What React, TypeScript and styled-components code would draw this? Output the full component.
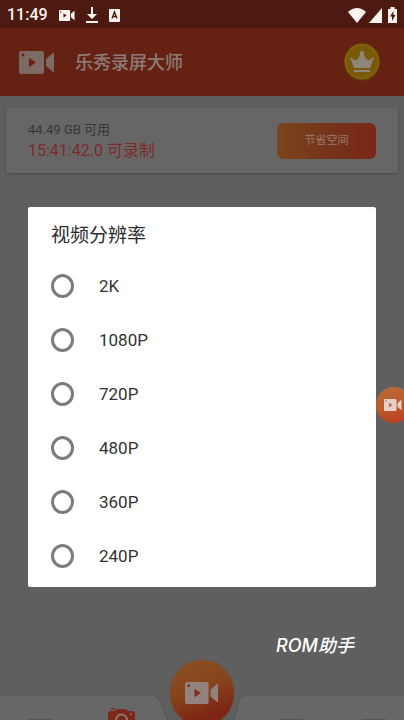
import React from "react";
import styled, { createGlobalStyle } from "styled-components";

const GlobalStyle = createGlobalStyle`
  * { box-sizing: border-box; }
  body {
    margin: 0;
    background: #5f5f5f;
    font-family: Roboto, "Noto Sans CJK SC", sans-serif;
  }
  button { font-family: inherit; border: 0; padding: 0; cursor: pointer; }
`;

const Screen = styled.div`
  position: relative;
  display: flex;
  flex-direction: column;
  height: 100vh;
  overflow: hidden;
  background: #5f5f5f;
`;

const StatusBar = styled.div`
  display: flex;
  align-items: center;
  gap: 11px;
  height: 28px;
  padding: 2px 7px 0 7px;
  background: #4d1a11;
  color: #fff5ee;
`;

const Clock = styled.time`
  font-size: 16px;
  line-height: 20px;
  font-weight: 500;
`;

const StatusRight = styled.div`
  display: flex;
  align-items: center;
  gap: 3px;
  margin-left: auto;
`;

const Header = styled.header`
  display: flex;
  align-items: center;
  height: 68px;
  padding: 0 24px 0 19px;
  gap: 20px;
  background: #652213;
`;

const AppTitle = styled.h1`
  flex: 1;
  margin: 0;
  padding-top: 2px;
  font-size: 18px;
  line-height: 24px;
  font-weight: 500;
  color: #8b7a76;
`;

const CrownButton = styled.button`
  display: flex;
  width: 36px;
  height: 38px;
  background: none;
`;

const StorageCard = styled.section`
  display: flex;
  align-items: center;
  justify-content: space-between;
  height: 65px;
  margin: 12px 6px 0;
  padding: 0 22px;
  border-radius: 3px;
  background: #676667;
  box-shadow: 0 1px 3px rgba(0, 0, 0, 0.25);
`;

const Available = styled.p`
  margin: 0;
  font-size: 13px;
  line-height: 20px;
  color: #363637;
`;

const Recordable = styled.p`
  margin: 0;
  font-size: 16px;
  line-height: 22px;
  color: #7c2b27;
`;

const SaveSpaceButton = styled.button`
  width: 99px;
  height: 36px;
  border-radius: 6px;
  background: linear-gradient(90deg, #7a451a, #76341b 50%, #782716);
  color: #9a7b70;
  font-size: 11px;
  line-height: 16px;
`;

const BottomNav = styled.nav`
  position: relative;
  display: grid;
  grid-template-columns: 1fr 98px 1fr;
  height: 24px;
  margin-top: auto;
`;

const NavGroup = styled.div`
  display: flex;
  justify-content: space-between;
  align-items: flex-end;
  padding: 0 18px 0 28px;
  background: #686768;
`;

const NavButton = styled.button`
  display: flex;
  align-items: flex-end;
  height: 20px;
  background: none;
`;

const RecordButton = styled.button`
  position: absolute;
  left: 50%;
  top: -36px;
  display: flex;
  align-items: center;
  justify-content: center;
  width: 64px;
  height: 66px;
  margin-left: -32px;
  border-radius: 50%;
  background: linear-gradient(160deg, #8a5222, #87431b 45%, #7d2413 80%);
  box-shadow: 0 0 2px #6d4c38;
`;

const FloatingButton = styled.button`
  position: absolute;
  right: -8px;
  top: 387px;
  display: flex;
  align-items: center;
  width: 36px;
  height: 36px;
  padding-left: 8px;
  border-radius: 50%;
  background: linear-gradient(165deg, #b76c3c, #bd5a29 50%, #bd3b20);
`;

const ModalLayer = styled.div`
  position: absolute;
  inset: 74px 28px 0;
  display: flex;
  align-items: center;
  pointer-events: none;
`;

const Dialog = styled.form`
  flex: 1;
  pointer-events: auto;
  padding: 14px 23px 4px;
  border-radius: 2px;
  background: #fff;
`;

const Options = styled.fieldset`
  margin: 0;
  padding: 0;
  border: 0;
`;

const DialogTitle = styled.legend`
  padding: 0;
  margin-bottom: 8px;
  font-size: 19px;
  line-height: 30px;
  color: #2c2c2c;
`;

const Option = styled.label`
  display: flex;
  align-items: center;
  gap: 25px;
  height: 54px;
  font-size: 17px;
  line-height: 24px;
  color: #333;
`;

const Radio = styled.input`
  appearance: none;
  width: 23px;
  height: 24px;
  margin: 0;
  border: 3px solid #7c7c7f;
  border-radius: 50%;
  background: #fff;
  &:checked { box-shadow: inset 0 0 0 4px #fff; background: #e0482b; }
`;

const Watermark = styled.span`
  position: absolute;
  right: 50px;
  bottom: 62px;
  font-family: Inter, "Noto Sans CJK SC", sans-serif;
  font-size: 18px;
  line-height: 24px;
  font-weight: 500;
  font-style: italic;
  color: #fff;
`;

type CamcorderProps = { width: number; height: number; body: string; play: string };

const Camcorder = ({ width, height, body, play }: CamcorderProps) => (
  <svg width={width} height={height} viewBox="0 0 36 23" preserveAspectRatio="none" aria-hidden="true">
    <rect x="0" y="0" width="25" height="23" rx="2" fill={body} />
    <path d="M27 8 34 2Q35 1 35 3V20Q35 22 34 21L27 15Z" fill={body} />
    <path d="M10 7v9l7-4.5Z" fill={play} />
    <circle cx="4" cy="4" r="1.5" fill={play} />
  </svg>
);

const DownloadIcon = () => (
  <svg width="12" height="16" viewBox="0 0 12 16" fill="currentColor" aria-hidden="true">
    <path d="M5 0h2v7h4l-5 5-5-5h4ZM0 14h12v2H0Z" />
  </svg>
);

const LetterBadge = () => (
  <svg width="11" height="13" viewBox="0 0 11 13" aria-hidden="true">
    <rect width="11" height="13" rx="1" fill="currentColor" />
    <path d="M3 9.5 5.5 3 8 9.5M4 7.5h3" fill="none" stroke="#4d1a11" strokeWidth="1.4" />
  </svg>
);

const WifiIcon = () => (
  <svg width="18" height="15" viewBox="0 0 18 15" fill="currentColor" aria-hidden="true">
    <path d="M0 4Q9-4 18 4L9 15Z" />
  </svg>
);

const SignalIcon = () => (
  <svg width="13" height="15" viewBox="0 0 13 15" fill="currentColor" aria-hidden="true">
    <path d="M13 0v15H0Z" />
  </svg>
);

const BatteryIcon = () => (
  <svg width="9" height="16" viewBox="0 0 9 16" aria-hidden="true">
    <path d="M2.5 0h4v2H9v14H0V2h2.5Z" fill="currentColor" />
    <path d="M5.5 4 2 9.5h2V14l3.5-6h-2Z" fill="#4d1a11" />
  </svg>
);

const CrownIcon = () => (
  <svg width="36" height="38" viewBox="0 0 36 38" aria-hidden="true">
    <ellipse cx="18" cy="19.5" rx="18" ry="18.5" fill="#5b3c0c" />
    <ellipse cx="18" cy="18.5" rx="17.5" ry="18" fill="#806008" />
    <ellipse cx="18" cy="18.5" rx="15.5" ry="16" fill="#795a08" />
    <path d="M6 14 11 17Q15 18 16.500 8h3Q21 18 25 17l5-3-4 11H10ZM10 27h16v2H10Z" fill="#8d8678" />
  </svg>
);

const NotchCurve = () => (
  <svg width="98" height="24" viewBox="0 0 98 24" aria-hidden="true">
    <path d="M0 0h2Q6 1 9 10L15 24H0Z" fill="#686768" />
    <path d="M2 0Q6 1 9 10L15 24" fill="none" stroke="#555354" />
    <path d="M98 0h-6Q87 0 86 5L81 24H98Z" fill="#686768" />
    <path d="M92 0Q87 0 86 5L81 24" fill="none" stroke="#585758" />
  </svg>
);

const CameraIcon = () => (
  <svg width="27" height="12" viewBox="0 0 27 12" aria-hidden="true">
    <path d="M0 12V6q0-3 3-3h4l2-2h9l2 2h4q3 0 3 3v6Z" fill="#7b281a" />
    <path d="M8 12a5.5 5.5 0 0 1 11 0" fill="none" stroke="#8c7772" strokeWidth="2" />
    <path d="M3 1h4" stroke="#7b281a" strokeWidth="1.5" />
    <circle cx="23" cy="6" r="1" fill="#8c7772" />
  </svg>
);

const TabTop = () => (
  <svg width="24" height="1" viewBox="0 0 24 1" aria-hidden="true">
    <rect width="24" height="1" fill="#5c535a" />
  </svg>
);

const resolutions = ["2K", "1080P", "720P", "480P", "360P", "240P"];

export default function App() {
  return (
    <>
      <GlobalStyle />
      <Screen>
        <StatusBar>
          <Clock>11:49</Clock>
          <Camcorder width={16} height={11} body="#fff5ee" play="#4d1a11" />
          <DownloadIcon />
          <LetterBadge />
          <StatusRight>
            <WifiIcon />
            <SignalIcon />
            <span />
            <BatteryIcon />
          </StatusRight>
        </StatusBar>
        <Header>
          <Camcorder width={36} height={23} body="#7d6a64" play="#652213" />
          <AppTitle>乐秀录屏大师</AppTitle>
          <CrownButton type="button" aria-label="VIP">
            <CrownIcon />
          </CrownButton>
        </Header>
        <StorageCard>
          <div>
            <Available>44.49 GB 可用</Available>
            <Recordable>15:41:42.0 可录制</Recordable>
          </div>
          <SaveSpaceButton type="button">节省空间</SaveSpaceButton>
        </StorageCard>
        <BottomNav>
          <NavGroup>
            <NavButton type="button" aria-label="视频"><TabTop /></NavButton>
            <NavButton type="button" aria-label="截图"><CameraIcon /></NavButton>
          </NavGroup>
          <NotchCurve />
          <NavGroup>
            <NavButton type="button" aria-label="编辑"><TabTop /></NavButton>
            <NavButton type="button" aria-label="设置"><TabTop /></NavButton>
          </NavGroup>
          <RecordButton type="button" aria-label="录制">
            <Camcorder width={34} height={22} body="#93827e" play="#7f2f20" />
          </RecordButton>
        </BottomNav>
        <ModalLayer>
          <Dialog role="dialog" aria-label="视频分辨率">
            <Options>
              <DialogTitle>视频分辨率</DialogTitle>
              {resolutions.map((name) => (
                <Option key={name}>
                  <Radio type="radio" name="resolution" value={name} />
                  {name}
                </Option>
              ))}
            </Options>
          </Dialog>
        </ModalLayer>
        <FloatingButton type="button" aria-label="悬浮录制">
          <Camcorder width={18} height={12} body="#e8cfc8" play="#a36a55" />
        </FloatingButton>
        <Watermark>ROM助手</Watermark>
      </Screen>
    </>
  );
}
